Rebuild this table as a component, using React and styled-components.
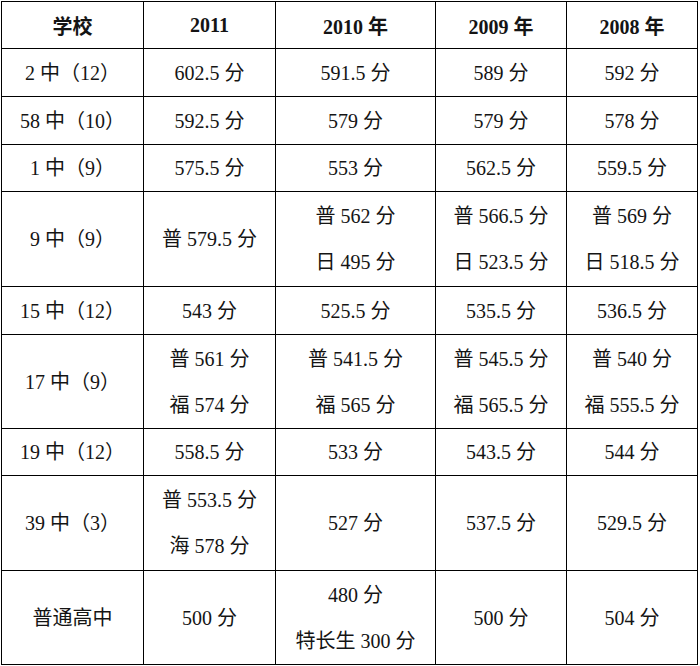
import React from 'react';
import styled, { createGlobalStyle } from 'styled-components';

const GlobalStyle = createGlobalStyle`
  html, body {
    margin: 0;
    padding: 0;
    background: #ffffff;
  }
  body {
    font-family: "Liberation Serif", "Noto Sans CJK SC", serif;
    color: #141414;
  }
`;

const Table = styled.table`
  margin: 1px 0 0 1px;
  width: 697px;
  table-layout: fixed;
  border-collapse: collapse;
  font-size: 20px;
`;

const Row = styled.tr`
  height: ${props => props.h}px;
`;

const Cell = styled.td`
  border: 1px solid #000;
  padding: 0;
  height: ${props => props.h}px;
  text-align: center;
  vertical-align: middle;
  white-space: nowrap;
  font-weight: ${props => props.head ? 700 : 400};
`;

const Line = styled.div`
  height: 46px;
  line-height: 46px;
  overflow: visible;
`;

const widths = [142, 132, 160, 131, 131];

const header = ['学校', '2011', '2010 年', '2009 年', '2008 年'];

const rows = [
  { h: 47, cells: [['2 中（12）'], ['602.5 分'], ['591.5 分'], ['589 分'], ['592 分']] },
  { h: 47, cells: [['58 中（10）'], ['592.5 分'], ['579 分'], ['579 分'], ['578 分']] },
  { h: 46, cells: [['1 中（9）'], ['575.5 分'], ['553 分'], ['562.5 分'], ['559.5 分']] },
  { h: 94, cells: [['9 中（9）'], ['普 579.5 分'], ['普 562 分', '日 495 分'], ['普 566.5 分', '日 523.5 分'], ['普 569 分', '日 518.5 分']] },
  { h: 47, cells: [['15 中（12）'], ['543 分'], ['525.5 分'], ['535.5 分'], ['536.5 分']] },
  { h: 93, cells: [['17 中（9）'], ['普 561 分', '福 574 分'], ['普 541.5 分', '福 565 分'], ['普 545.5 分', '福 565.5 分'], ['普 540 分', '福 555.5 分']] },
  { h: 46, cells: [['19 中（12）'], ['558.5 分'], ['533 分'], ['543.5 分'], ['544 分']] },
  { h: 94, cells: [['39 中（3）'], ['普 553.5 分', '海 578 分'], ['527 分'], ['537.5 分'], ['529.5 分']] },
  { h: 93, cells: [['普通高中'], ['500 分'], ['480 分', '特长生 300 分'], ['500 分'], ['504 分']] },
];

function App() {
  return (
    <>
      <GlobalStyle />
      <Table>
        <colgroup>
          {widths.map((w, i) => (
            <col key={i} style={{ width: w }} />
          ))}
        </colgroup>
        <tbody>
          <Row h={46}>
            {header.map((t, i) => (
              <Cell key={i} h={46} head>{t}</Cell>
            ))}
          </Row>
          {rows.map((row, r) => (
            <Row key={r} h={row.h}>
              {row.cells.map((lines, c) => (
                <Cell key={c} h={row.h}>
                  {lines.map((l, k) => (
                    <Line key={k}>{l}</Line>
                  ))}
                </Cell>
              ))}
            </Row>
          ))}
        </tbody>
      </Table>
    </>
  );
}

export default App;
